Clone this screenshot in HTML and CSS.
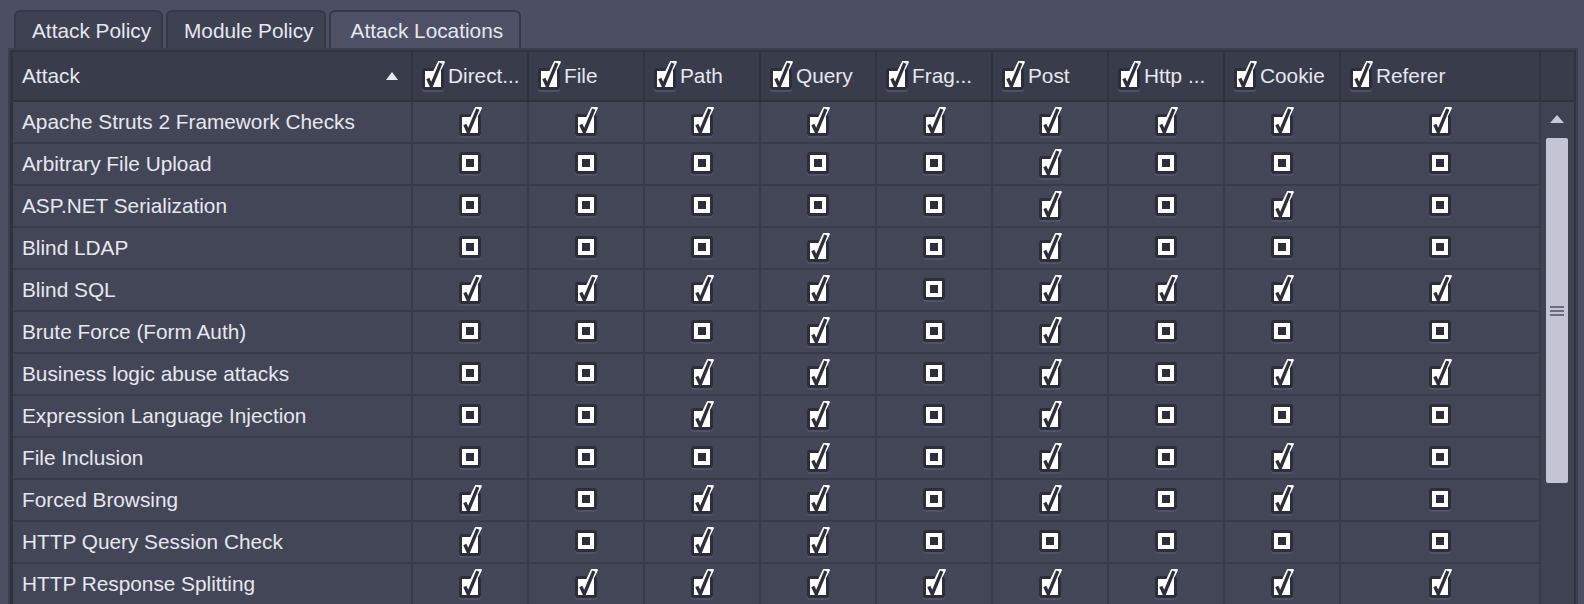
FILE: index.html
```html
<!DOCTYPE html>
<html lang="en">
<head>
  <meta charset="UTF-8" />
  <title>Attack Locations</title>
  <link rel="stylesheet" href="styles.css">
</head>
<body>
  <svg class="defs" width="0" height="0">
    <symbol id="cb-on" viewBox="0 0 30 31">
      <rect x="4" y="9" width="22" height="22" rx="3" fill="#505367"/>
      <rect x="4" y="7" width="22" height="22" rx="3" fill="#2c2e3a"/>
      <rect x="7" y="10" width="16" height="16" fill="#fff"/>
      <polyline points="16.5,15 22.8,2.2" fill="none" stroke="#fff" stroke-width="6.5" stroke-linecap="square"/>
      <polyline points="9.8,17.5 13.3,25 22.8,2.2" fill="none" stroke="#2c2e3a" stroke-width="3.4"/>
    </symbol>
    <symbol id="cb-off" viewBox="0 0 22 24">
      <rect x="0" y="2" width="22" height="22" rx="3" fill="#505367"/>
      <rect x="0" y="0" width="22" height="22" rx="3" fill="#2c2e3a"/>
      <rect x="3" y="3" width="16" height="16" fill="#fff"/>
      <rect x="7" y="7" width="8" height="8" fill="#2c2e3a"/>
    </symbol>
  </svg>

  <div class="tabs">
    <div class="tab">Attack Policy</div>
    <div class="tab">Module Policy</div>
    <div class="tab active">Attack Locations</div>
  </div>

  <div class="frame">
    <div class="table">
      <div class="head">
        <div class="hcell attack">Attack <span class="sort"></span></div>
        <div class="hcell"><svg class="cb on"><use href="#cb-on"/></svg>Direct...</div>
        <div class="hcell"><svg class="cb on"><use href="#cb-on"/></svg>File</div>
        <div class="hcell"><svg class="cb on"><use href="#cb-on"/></svg>Path</div>
        <div class="hcell"><svg class="cb on"><use href="#cb-on"/></svg>Query</div>
        <div class="hcell"><svg class="cb on"><use href="#cb-on"/></svg>Frag...</div>
        <div class="hcell"><svg class="cb on"><use href="#cb-on"/></svg>Post</div>
        <div class="hcell"><svg class="cb on"><use href="#cb-on"/></svg>Http ...</div>
        <div class="hcell"><svg class="cb on"><use href="#cb-on"/></svg>Cookie</div>
        <div class="hcell"><svg class="cb on"><use href="#cb-on"/></svg>Referer</div>
        <div class="hcell corner"></div>
      </div>
      <div class="body">
        <div class="rows" id="rows"></div>
        <div class="scroll">
          <span class="up"></span>
          <div class="thumb"><i></i><i></i><i></i></div>
        </div>
      </div>
    </div>
  </div>

  <script>
    // 1 = checked, 0 = unchecked; columns: Direct File Path Query Frag Post Http Cookie Referer
    const attacks = [
      ['Apache Struts 2 Framework Checks', '111111111'],
      ['Arbitrary File Upload', '000001000'],
      ['ASP.NET Serialization', '000001010'],
      ['Blind LDAP', '000101000'],
      ['Blind SQL', '111101111'],
      ['Brute Force (Form Auth)', '000101000'],
      ['Business logic abuse attacks', '001101011'],
      ['Expression Language Injection', '001101000'],
      ['File Inclusion', '000101010'],
      ['Forced Browsing', '101101010'],
      ['HTTP Query Session Check', '101100000'],
      ['HTTP Response Splitting', '111111111']
    ];

    const box = on => on === '1'
      ? '<svg class="cb on"><use href="#cb-on"/></svg>'
      : '<svg class="cb off"><use href="#cb-off"/></svg>';

    document.getElementById('rows').innerHTML = attacks.map(([name, flags]) =>
      `<div class="row"><div class="cell name">${name}</div>` +
      flags.split('').map(f => `<div class="cell">${box(f)}</div>`).join('') +
      `</div>`
    ).join('');
  </script>
</body>
</html>
```

FILE: styles.css
```css
* {
  box-sizing: border-box;
}

html, body {
  margin: 0;
  height: 100%;
  overflow: hidden;
}

body {
  background-color: #4c4f62;
  font-family: "Liberation Sans", Arial, sans-serif;
  font-size: 20.8px;
  color: #e6e7ef;
}

.defs {
  position: absolute;
}

.tabs {
  display: flex;
  gap: 3px;
  height: 48px;
  padding: 10px 0 0 14px;
}

.tab {
  display: flex;
  align-items: center;
  height: 38px;
  padding: 2px 10px 0 16px;
  background-color: #3e4152;
  border: 2px solid #353847;
  border-bottom: none;
  border-radius: 6px 6px 0 0;
}

.tab.active {
  padding: 2px 16px 0 20px;
  background-color: #4e5165;
}

.frame {
  margin-left: 8px;
  width: 1570px;
  border: 2px solid #3c3f50;
}

.table {
  border: 2px solid #30323d;
  border-left-width: 3px;
}

.head {
  display: grid;
  grid-template-columns: 400px repeat(8, 116px) 200px 1fr;
  height: 50px;
  background-color: #393c4b;
  border-bottom: 2px solid #30323d;
}

.hcell {
  display: flex;
  align-items: center;
  padding-left: 5px;
  border-right: 2px solid #30323d;
  white-space: nowrap;
  overflow: hidden;
}

.hcell.attack {
  justify-content: space-between;
  padding: 0 13px 0 9px;
}

.hcell.corner {
  border-right: none;
}

.sort {
  width: 0;
  height: 0;
  border-left: 6px solid transparent;
  border-right: 6px solid transparent;
  border-bottom: 8px solid #e8e9f1;
}

.cb.on {
  width: 30px;
  height: 31px;
  flex-shrink: 0;
}

.cb.off {
  width: 22px;
  height: 24px;
}

.body {
  display: flex;
}

.rows {
  width: 1528px;
}

.row {
  display: grid;
  grid-template-columns: 400px repeat(8, 116px) 200px;
  height: 42px;
}

.cell {
  display: flex;
  align-items: center;
  justify-content: center;
  background-color: #434656;
  border-right: 2px solid #383b49;
  border-bottom: 2px solid #383b49;
}

.cell.name {
  justify-content: flex-start;
  padding-left: 9px;
  white-space: nowrap;
}

.scroll {
  flex: 1;
  display: flex;
  flex-direction: column;
  align-items: flex-start;
  padding: 13px 0 0 5px;
  background-color: #3f4252;
}

.up {
  margin-left: 4px;
  width: 0;
  height: 0;
  border-left: 7px solid transparent;
  border-right: 7px solid transparent;
  border-bottom: 8px solid #c8c9d6;
}

.thumb {
  display: flex;
  flex-direction: column;
  align-items: center;
  justify-content: center;
  gap: 2px;
  margin-top: 15px;
  width: 22px;
  height: 345px;
  background-color: #c3c4d4;
  border-radius: 2px;
}

.thumb i {
  display: block;
  width: 14px;
  height: 2px;
  background-color: #6a6c80;
}
```
